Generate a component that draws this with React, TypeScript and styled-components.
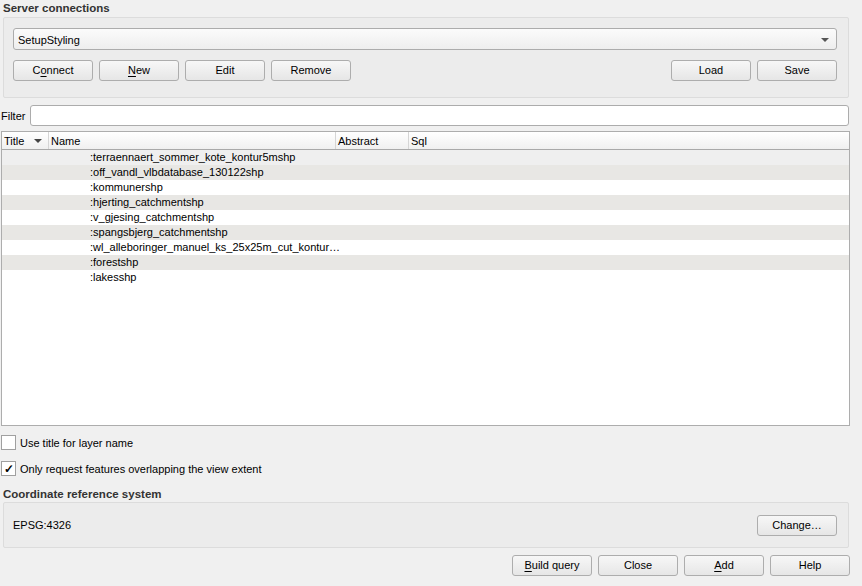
import React from "react";
import styled, { createGlobalStyle } from "styled-components";

const GlobalStyle = createGlobalStyle`
  html, body {
    margin: 0;
    padding: 0;
    background: #f0f0f0;
  }
  body {
    font-family: "Liberation Sans", Arial, sans-serif;
    font-size: 11px;
    color: #000;
  }
`;

const Dialog = styled.div`
  width: 850px;
  height: 586px;
  display: flex;
  flex-direction: column;
  background: #f0f0f0;
`;

const SectionTitle = styled.div<{ $top?: number; $h?: number }>`
  font-weight: 700;
  font-size: 11.5px;
  color: #333;
  height: ${(p) => p.$h ?? 17}px;
  line-height: 16px;
  padding-left: 3px;
  margin-top: ${(p) => p.$top ?? 0}px;
`;

const GroupBox = styled.div<{ $h: number }>`
  margin-left: 3px;
  width: 846px;
  height: ${(p) => p.$h}px;
  box-sizing: border-box;
  border: 1px solid #dcdcdc;
  border-radius: 2px;
  background: #ececec;
  padding: 10px 11px 0 9px;
`;

const Combo = styled.div`
  height: 22px;
  box-sizing: border-box;
  border: 1px solid #acacac;
  border-radius: 3px;
  background: linear-gradient(#fbfbfb, #eeeeee);
  display: flex;
  align-items: center;
  padding: 1px 6px 0 4px;
  justify-content: space-between;
`;

const Arrow = styled.span`
  width: 0;
  height: 0;
  border-left: 4px solid transparent;
  border-right: 4px solid transparent;
  border-top: 4px solid #555;
  margin-right: 1px;
`;

const ButtonRow = styled.div<{ $top?: number; $justify?: string }>`
  display: flex;
  gap: 6px;
  margin-top: ${(p) => p.$top ?? 0}px;
  justify-content: ${(p) => p.$justify ?? "flex-start"};
`;

const Spacer = styled.div`
  flex: 1;
`;

const Button = styled.button`
  width: 80px;
  height: 21px;
  box-sizing: border-box;
  border: 1px solid #adadad;
  border-radius: 3px;
  background: linear-gradient(#f7f7f7, #e6e6e6);
  font-family: inherit;
  font-size: 11px;
  color: #000;
  padding: 0;
  line-height: 19px;
  u {
    text-decoration: underline;
    text-underline-offset: 2px;
  }
`;

const FilterRow = styled.div`
  display: flex;
  align-items: center;
  margin-top: 7px;
  height: 21px;
`;

const FilterLabel = styled.label`
  width: 30px;
  padding-left: 1px;
  box-sizing: border-box;
  line-height: 21px;
  padding-top: 2px;
`;

const Input = styled.div`
  width: 819px;
  height: 21px;
  box-sizing: border-box;
  border: 1px solid #acacac;
  border-radius: 3px;
  background: #fff;
`;

const Table = styled.div`
  margin: 5px 0 0 1px;
  width: 849px;
  height: 295px;
  box-sizing: border-box;
  border: 1px solid #adadad;
  background: #fff;
  display: flex;
  flex-direction: column;
  overflow: hidden;
`;

const Header = styled.div`
  display: flex;
  height: 17px;
  flex-shrink: 0;
  border-bottom: 1px solid #a9a9a9;
  background: linear-gradient(#ffffff, #f0f0f0);
`;

const HeaderCell = styled.div<{ $w?: number }>`
  ${(p) => (p.$w ? `width: ${p.$w}px;` : "flex: 1;")}
  box-sizing: border-box;
  border-right: 1px solid #d5d5d5;
  padding: 1px 0 0 2px;
  line-height: 16px;
  display: flex;
  align-items: center;
  justify-content: space-between;
  &:last-child {
    border-right: none;
  }
`;

const SortArrow = styled.span`
  width: 0;
  height: 0;
  border-left: 4px solid transparent;
  border-right: 4px solid transparent;
  border-top: 4px solid #444;
  margin-right: 6px;
`;

const Row = styled.div<{ $bg: string }>`
  height: 15px;
  line-height: 15px;
  background: ${(p) => p.$bg};
  padding-left: 88px;
  white-space: nowrap;
`;

const CheckRow = styled.div<{ $top: number }>`
  display: flex;
  align-items: center;
  gap: 4px;
  margin-top: ${(p) => p.$top}px;
  margin-left: 1px;
  height: 15px;
`;

const Box = styled.span`
  width: 15px;
  height: 15px;
  box-sizing: border-box;
  border: 1px solid #a0a0a0;
  background: #fff;
  display: flex;
  align-items: center;
  justify-content: center;
  font-size: 12px;
  font-weight: 700;
  line-height: 1;
`;

const CrsBox = styled(GroupBox)`
  display: flex;
  align-items: center;
  justify-content: space-between;
  padding: 0 11px 0 9px;
`;

const rows = [
  ":terraennaert_sommer_kote_kontur5mshp",
  ":off_vandl_vlbdatabase_130122shp",
  ":kommunershp",
  ":hjerting_catchmentshp",
  ":v_gjesing_catchmentshp",
  ":spangsbjerg_catchmentshp",
  ":wl_alleboringer_manuel_ks_25x25m_cut_kontur…",
  ":forestshp",
  ":lakesshp",
];

function rowColor(i: number) {
  if (i === 0) return "#efefef";
  return i % 2 === 1 ? "#e8e7e4" : "#ffffff";
}

export default function App() {
  return (
    <Dialog>
      <GlobalStyle />
      <SectionTitle>Server connections</SectionTitle>
      <GroupBox $h={81}>
        <Combo>
          <span>SetupStyling</span>
          <Arrow />
        </Combo>
        <ButtonRow $top={10}>
          <Button>C<u>o</u>nnect</Button>
          <Button><u>N</u>ew</Button>
          <Button>Edit</Button>
          <Button>Remove</Button>
          <Spacer />
          <Button>Load</Button>
          <Button>Save</Button>
        </ButtonRow>
      </GroupBox>
      <FilterRow>
        <FilterLabel>Filter</FilterLabel>
        <Input />
      </FilterRow>
      <Table>
        <Header>
          <HeaderCell $w={47}>
            Title <SortArrow />
          </HeaderCell>
          <HeaderCell $w={287}>Name</HeaderCell>
          <HeaderCell $w={73}>Abstract</HeaderCell>
          <HeaderCell>Sql</HeaderCell>
        </Header>
        {rows.map((r, i) => (
          <Row key={r} $bg={rowColor(i)}>
            {r}
          </Row>
        ))}
      </Table>
      <CheckRow $top={9}>
        <Box />
        <span>Use title for layer name</span>
      </CheckRow>
      <CheckRow $top={11}>
        <Box>✓</Box>
        <span>Only request features overlapping the view extent</span>
      </CheckRow>
      <SectionTitle $top={10} $h={16}>Coordinate reference system</SectionTitle>
      <CrsBox $h={46}>
        <span>EPSG:4326</span>
        <Button>Change…</Button>
      </CrsBox>
      <ButtonRow $top={7} $justify="flex-end">
        <Button><u>B</u>uild query</Button>
        <Button>Close</Button>
        <Button><u>A</u>dd</Button>
        <Button>Help</Button>
      </ButtonRow>
    </Dialog>
  );
}
